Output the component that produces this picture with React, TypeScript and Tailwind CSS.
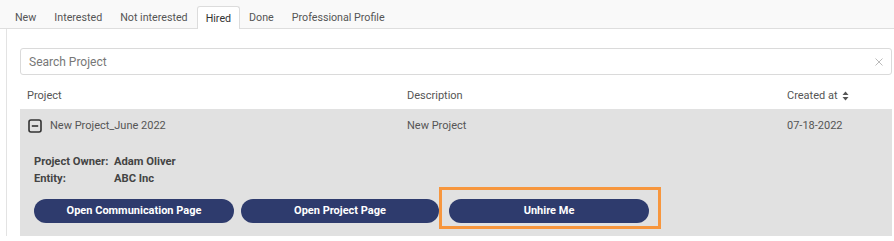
import React from "react";

const tabs = ["New", "Interested", "Not interested", "Hired", "Done", "Professional Profile"];

const SortIcon = () => (
  <svg width="7" height="10" viewBox="0 0 7 10" className="ml-[4px]">
    <path d="M3.5 0.5 L6.5 4 H0.5 Z" fill="#555" />
    <path d="M3.5 9.5 L6.5 6 H0.5 Z" fill="#555" />
  </svg>
);

const MinusSquare = () => (
  <svg width="14" height="14" viewBox="0 0 14 14">
    <rect x="1" y="1" width="12" height="12" rx="2" fill="none" stroke="#333" strokeWidth="1.6" />
    <path d="M3.8 7 H10.2" stroke="#333" strokeWidth="1.6" />
  </svg>
);

const App = () => {
  return (
    <div
      className="w-[894px] h-[241px] bg-white overflow-hidden"
      style={{ fontFamily: "Roboto, 'Liberation Sans', sans-serif" }}
    >
      {/* TABS */}
      <div className="h-[29px] bg-[#f9f9f9] flex items-end pl-[6px] border-b border-[#dedede]">
        {tabs.map((tab) =>
          tab === "Hired" ? (
            <div
              key={tab}
              className="h-[23px] -mb-px px-[8px] pt-[2px] flex items-center bg-white border border-b-0 border-[#dcdcdc] rounded-t-[3px] text-[10.7px] text-[#333]"
            >
              {tab}
            </div>
          ) : (
            <div key={tab} className="h-[22px] px-[9px] pt-[2px] flex items-center text-[10.7px] text-[#555]">
              {tab}
            </div>
          )
        )}
      </div>

      {/* PANEL */}
      <div className="ml-[6px] h-[207px] border-l border-[#e3e3e3] bg-white pt-[19px] pl-[13px] pr-[2px]">
        {/* SEARCH */}
        <div className="h-[27px] border border-[#dadada] rounded-[3px] flex items-center justify-between pl-[8px] pr-[8px]">
          <span className="text-[12px] text-[#777]">Search Project</span>
          <svg width="8" height="8" viewBox="0 0 8 8">
            <path d="M0.5 0.5 L7.5 7.5 M7.5 0.5 L0.5 7.5" stroke="#bbb" strokeWidth="1" />
          </svg>
        </div>

        {/* HEADER */}
        <div className="h-[34px] pt-[8px] pl-[7px] flex items-center text-[11px] text-[#555]">
          <div className="w-[380px]">Project</div>
          <div className="w-[380px]">Description</div>
          <div className="flex items-center">
            Created at
            <SortIcon />
          </div>
        </div>

        {/* ROW */}
        <div className="bg-[#e1e1e1] h-[127px]">
          <div className="h-[34px] pl-[8px] flex items-center text-[11px] text-[#555]">
            <div className="w-[379px] flex items-center gap-[8px]">
              <MinusSquare />
              <span>New Project_June 2022</span>
            </div>
            <div className="w-[380px]">New Project</div>
            <div>07-18-2022</div>
          </div>
          <div className="pl-[14px] pt-[11px] text-[11.2px] font-bold text-[#444]">
            <div className="flex h-[17px] items-center">
              <span className="w-[80px]">Project Owner:</span>
              <span>Adam Oliver</span>
            </div>
            <div className="flex h-[17px] items-center">
              <span className="w-[80px]">Entity:</span>
              <span>ABC Inc</span>
            </div>
            <div className="flex mt-[11px] items-center">
              <button className="w-[200px] h-[24px] rounded-full bg-[#2e3b6d] text-white text-[11px] font-bold">
                Open Communication Page
              </button>
              <button className="ml-[7px] w-[198px] h-[24px] rounded-full bg-[#2e3b6d] text-white text-[11px] font-bold">
                Open Project Page
              </button>
              <div className="relative ml-[10px]">
                <button className="w-[200px] h-[24px] rounded-full bg-[#2e3b6d] text-white text-[11px] font-bold">
                  Unhire Me
                </button>
                <span className="absolute left-[-10px] top-[-12px] right-[-12px] bottom-[-6px] border-[3px] border-[#f7963d]" />
              </div>
            </div>
          </div>
        </div>
      </div>
    </div>
  );
};

export default App;
